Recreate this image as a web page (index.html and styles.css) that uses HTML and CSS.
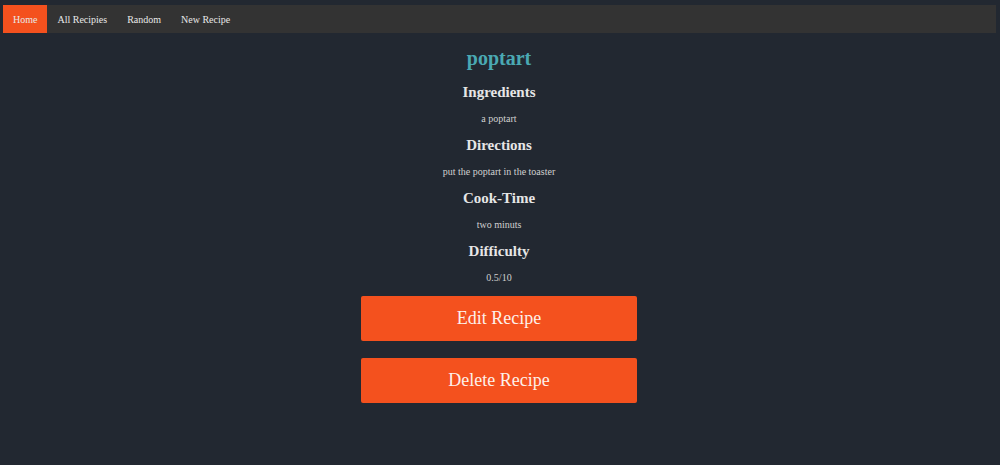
FILE: index.html
```html
<!DOCTYPE html>
<html>
<head>
<meta charset="utf-8">
<link rel="stylesheet" href="styles.css">
</head>
<body>
<nav class="nav">
  <a class="nav-item active" href="#">Home</a>
  <a class="nav-item" href="#">All Recipies</a>
  <a class="nav-item" href="#">Random</a>
  <a class="nav-item" href="#">New Recipe</a>
</nav>
<main class="recipe">
  <h1 class="title">poptart</h1>
  <h2 class="section">Ingredients</h2>
  <p class="text">a poptart</p>
  <h2 class="section">Directions</h2>
  <p class="text">put the poptart in the toaster</p>
  <h2 class="section">Cook-Time</h2>
  <p class="text">two minuts</p>
  <h2 class="section">Difficulty</h2>
  <p class="text">0.5/10</p>
  <button class="btn btn-first">Edit Recipe</button>
  <button class="btn">Delete Recipe</button>
</main>
</body>
</html>
```
FILE: styles.css
```css
html, body {
  margin: 0;
  padding: 0;
  background: #222831;
  font-family: "Liberation Serif", "Times New Roman", serif;
}
body {
  padding: 5px 4px 5px 3px;
}
.nav {
  display: flex;
  height: 28px;
  background: #333333;
}
.nav-item {
  display: flex;
  align-items: center;
  padding: 0 10px;
  font-size: 10px;
  color: #e8e8e8;
  text-decoration: none;
}
.nav-item.active {
  background: #f4511e;
}
.recipe {
  display: flex;
  flex-direction: column;
  align-items: center;
  margin-right: 1px;
}
.title {
  margin: 13px 0 0;
  font-size: 20px;
  line-height: 24px;
  color: #4aa9b3;
}
.section {
  margin: 9px 0 0;
  font-size: 15px;
  line-height: 20px;
  color: #e6e6e6;
}
.title + .section {
  margin-top: 12px;
}
.text {
  margin: 10px 0 0;
  font-size: 10px;
  line-height: 14px;
  color: #d0d0d0;
}
.btn {
  width: 276px;
  height: 45px;
  margin-top: 17px;
  border: none;
  border-radius: 2px;
  background: #f4511e;
  color: #fdf0ea;
  font-family: "Liberation Serif", "Times New Roman", serif;
  font-size: 18px;
}
.btn-first {
  margin-top: 11px;
}
```
